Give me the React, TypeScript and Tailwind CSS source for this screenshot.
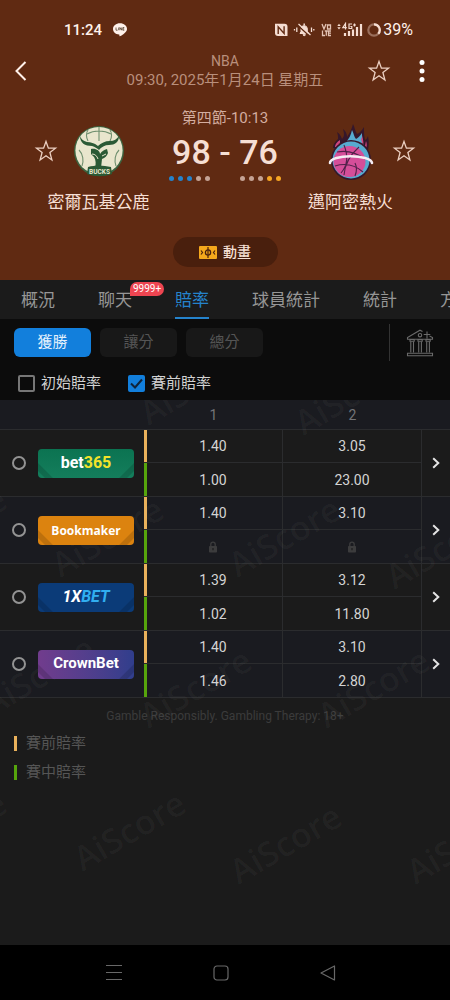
import React, { useState } from "react";
import type { ReactNode } from "react";

function StarIcon() {
  return (
    <svg viewBox="0 0 24 24" className="size-6" fill="none" stroke="currentColor" strokeWidth="1.3" strokeLinejoin="miter">
      <path d="M12 2.500l2.400 6.700H21.500l-5.600 4.300 2 7.500L12 16.800l-5.900 4.200 2-7.500L2.500 9.200h7.100z" />
    </svg>
  );
}

function LineIcon() {
  return (
    <svg viewBox="0 0 16 16" className="h-4 w-4" aria-label="LINE">
      <path d="M8 1.200C4 1.200 1 3.700 1 6.900c0 2.900 2.500 5.200 6 5.600.5.1.5.5.4 1.100-.1.700.2.900.9.500C10.500 12.900 15 10 15 6.900c0-3.200-3.100-5.700-7-5.700z" fill="#fff1ea" />
      <path d="M4 5.500v2.700h1.600M6.700 5.500v2.700M7.900 8.200V5.500l1.800 2.700V5.500M12.300 5.500h-1.400v2.700h1.400M10.900 6.900h1.300" stroke="#54402f" strokeWidth=".8" fill="none" />
    </svg>
  );
}

function StatusIcons() {
  return (
    <svg viewBox="0 0 106 16" className="h-4 w-[106px]" fill="none" aria-hidden="true">
      <path d="M0 1.800h9.500q3 0 3 3V14H3q-3 0-3-3z" fill="#f5ddd2" />
      <path d="M3.200 12V4.800l5.900 6.700V4.200" stroke="#602a12" strokeWidth="1.400" />
      <path d="M25 11.500h8.500l-1.200-2V6.300a3.200 3.200 0 0 0-6.300 0v3.200zM28 12.700h2.500a1.300 1.300 0 0 1-2.500 0z" fill="#f5ddd2" stroke="#f5ddd2" strokeWidth="1" />
      <path d="M29.200 1.500v2" stroke="#f5ddd2" strokeWidth="1.500" />
      <path d="M23 3.500l12 11" stroke="#602a12" strokeWidth="1.500" />
      <path d="M23.500 2l12 11" stroke="#f5ddd2" strokeWidth="1.300" />
      <path d="M21.800 5.500v4.500M19.500 7v1.500M36.500 5.500v4.500M38.800 7v1.500" stroke="#f5ddd2" strokeWidth="1.300" />
      <path d="M47 2l2 5 2-5M52.500 3h3v4h-3zM47.500 8.500V13.500h2.500M49.800 9h3M51.300 9v4.800M56 9h-2.500v4.500H56M53.500 11.200H56" stroke="#e3c3b4" strokeWidth="1.300" />
      <path d="M64 1.800l1.700 2.200h-3.400zM64 7.500l1.700-2.200h-3.400z" fill="#f5ddd2" />
      <path d="M70.500 7.500v-6l-2.700 4.200h4M77 2h-3v4.500h2.800V4.500h-1.400M78 3h3M79.500 1.500v3" stroke="#f5ddd2" strokeWidth="1.200" />
      <path d="M70 14V11M74 14V9M78 14V7.500M82 14V5M86 14V2" stroke="#f5ddd2" strokeWidth="2.200" />
      <circle cx="99" cy="8" r="5.700" stroke="#9a6f5c" strokeWidth="2.200" />
      <path d="M99 2.300a5.700 5.700 0 0 1 4.300 9.500" stroke="#f5ddd2" strokeWidth="2.200" />
    </svg>
  );
}

function BucksLogo() {
  return (
    <svg viewBox="0 0 52 52" className="size-[52px]" fill="none" aria-hidden="true">
      <circle cx="26" cy="26" r="25" fill="#3c6440" />
      <circle cx="26" cy="25.500" r="23.600" fill="#e9e6cd" />
      <path d="M26 2v14M15 5c-2 3-2 7 0 11M37 5c2 3 2 7 0 11M14 9c7-4 17-4 24 0M6 25c4 4 5 11 3 16M46 25c-4 4-5 11-3 16" stroke="#6f8f6e" strokeWidth="1.100" />
      <path d="M7 11c0 7 5 10 12 10 3 1 5 2 7 4 2-3 6-5 10-5 6 0 10-3 10-9-2 3-5 5-9 5-5 0-9 2-12 5-4-3-7-4-11-4-4-1-6-3-7-6z" fill="#2b5a35" />
      <path d="M18 24c5-1 9 2 9 5 2-3 4-4 7-5l1 4c-1 3-3 5-6 6l-1 9h-6c1-4 1-8-1-11l-3-3z" fill="#2b5a35" />
      <path d="M19 29c3 0 5 2 6 5M29 31l4-2" stroke="#e9e6cd" strokeWidth="1" />
      <path d="M15 42c7-2 15-2 23 0l1 7c-8 3-17 3-25 0z" fill="#2b5a35" />
      <text x="26.500" y="48.500" textAnchor="middle" fill="#e9e6cd" fontSize="6.500" fontWeight="700" fontFamily="Roboto, sans-serif">BUCKS</text>
    </svg>
  );
}

function HeatLogo() {
  return (
    <svg viewBox="0 0 46 58" className="h-[58px] w-[46px]" fill="none" aria-hidden="true">
      <path d="M5 26c0-4 2-6 5-9 0-3 0-4-1-7 3 2 4 4 5 7 3-3 2-6 1-10 3 2 4 5 4 8 3-4 5-9 6-13 2 4 2 7 4 10 3-1 5-4 7-7 0 5 0 9 1 13 2-1 2-2 3-4 1 5 1 9 0 14z" fill="#35172b" />
      <path d="M17 21c4-4 6-8 7-13 2 4 2 7 4 9 2-1 4-3 6-6 0 5 0 9 2 13l-17 2z" fill="#57abd0" />
      <path d="M7 25c0-3 2-5 5-7 0 3 0 5-1 7zM33 17c1-1 1-2 1-4 1 5 2 7 1 11zM37 24l1-5c1 3 1 5 0 7z" fill="#cf4780" />
      <circle cx="23" cy="38" r="20" fill="#35172b" />
      <circle cx="23" cy="38" r="18.500" fill="#57abd0" />
      <ellipse cx="21.500" cy="39.500" rx="16" ry="15.500" fill="#d54e99" />
      <path d="M9 30c10-2 20 1 28 7M16 23c4 10 4 20-3 28M31 25c-8 7-14 15-15 28M7 44c10-3 20-1 28 6M27 41c2 4 2 8 0 13" stroke="#51214a" strokeWidth="1.100" />
      <path d="M2 41c0-9 41-9 42 0" stroke="#f5edf3" strokeWidth="2.600" strokeLinecap="round" />
    </svg>
  );
}

function CourtIcon() {
  return (
    <svg viewBox="0 0 18 13" className="h-[13px] w-[18px]" fill="none" aria-hidden="true">
      <rect width="18" height="13" rx="1" fill="#f5a81c" />
      <path d="M9 1v11M2 4.500l1.500 2L2 8.500M16 4.500l-1.500 2 1.500 2" stroke="#4a200d" strokeWidth="1.200" />
      <circle cx="9" cy="6.500" r="2.600" stroke="#4a200d" strokeWidth="1.300" />
    </svg>
  );
}

function BankIcon() {
  return (
    <svg viewBox="0 0 28 28" className="size-7" fill="none" stroke="#6a6a6a" strokeWidth="1.100" aria-hidden="true">
      <path d="M16.500 2.500L14 1.200 1.500 8.500v1.700h25V8.500l-3-1.500M21 2.500v7M17.700 5.500h6.600" />
      <circle cx="14" cy="6.200" r="1.700" />
      <path d="M4 10.500h4.200v1.700H4zM12 10.500h4.200v1.700H12zM20 10.500h4.200v1.700H20z" />
      <path d="M4.800 12.500v11M7.500 12.500v11M12.700 12.500v11M15.400 12.500v11M20.700 12.500v11M23.400 12.500v11" />
      <path d="M1.500 24.200h25v2.600h-25z" />
    </svg>
  );
}

function LockIcon() {
  return (
    <svg viewBox="0 0 10 12" className="mx-auto h-3 w-2.5" role="img" aria-label="已鎖定">
      <path d="M2.800 5V3.300a2.200 2.200 0 0 1 4.400 0V5" fill="none" stroke="#3c3c3d" strokeWidth="1.300" />
      <rect x="1" y="5" width="8" height="6.500" rx=".8" fill="#3c3c3d" />
      <path d="M5 7v2.300" stroke="#1c1c1e" strokeWidth="1.200" />
    </svg>
  );
}

function ChevronIcon() {
  return (
    <svg viewBox="0 0 8 12" className="h-3 w-2" fill="none" stroke="#e4e4e4" strokeWidth="2" aria-hidden="true">
      <path d="M1.200 1.200L6.300 6l-5.100 4.800" />
    </svg>
  );
}

const quarterTones = {
  blue: "bg-[#2583cc]",
  pale: "bg-[#c4a395]",
  gold: "bg-[#f6a623]",
};

function Dots({ tones }: { tones: (keyof typeof quarterTones)[] }) {
  return (
    <div className="flex gap-1">
      {tones.map((tone, i) => (
        <span key={i} className={`size-[5px] rounded-full ${quarterTones[tone]}`} />
      ))}
    </div>
  );
}

interface Bookie {
  name: string;
  plate: string;
  label: ReactNode;
  shaded: boolean;
  pre: string[];
  live: (string | null)[];
}

const bookies: Bookie[] = [
  {
    name: "bet365",
    plate: "bg-linear-to-b from-[#0b7351] to-[#147e5c]",
    label: <span className="text-base font-bold">bet<span className="text-[#f4e32a]">365</span></span>,
    shaded: false,
    pre: ["1.40", "3.05"],
    live: ["1.00", "23.00"],
  },
  {
    name: "Bookmaker",
    plate: "bg-[#dc830f]",
    label: <span className="font-['Open_Sans',sans-serif] text-xs font-bold">Bookmaker</span>,
    shaded: true,
    pre: ["1.40", "3.10"],
    live: [null, null],
  },
  {
    name: "1XBET",
    plate: "bg-[#0b3b78]",
    label: <span className="text-base font-bold italic">1X<span className="text-[#31aef0]">BET</span></span>,
    shaded: false,
    pre: ["1.39", "3.12"],
    live: ["1.02", "11.80"],
  },
  {
    name: "CrownBet",
    plate: "bg-linear-to-r from-[#713c8d] to-[#303e8c]",
    label: <span className="text-[15px] font-bold">CrownBet</span>,
    shaded: true,
    pre: ["1.40", "3.10"],
    live: ["1.46", "2.80"],
  },
];

function OddsRows({ bookie, picked, onPick }: { bookie: Bookie; picked: boolean; onPick: () => void }) {
  const tone = bookie.shaded ? "bg-[#1a1b20]" : "bg-[#1b1b1b]";
  return (
    <tbody className={tone}>
      <tr className="h-[33px]">
        <th rowSpan={2} scope="rowgroup" className="border-b border-[#2b2c2e] p-0 pl-3">
          <label className="flex items-center gap-3">
            <input
              type="radio"
              name="bookie"
              aria-label={bookie.name}
              checked={picked}
              onChange={onPick}
              className="size-3.5 shrink-0 appearance-none rounded-full border-2 border-[#939393] checked:border-4"
            />
            <span className={`relative z-10 flex h-[29px] w-24 items-center justify-center overflow-hidden rounded text-white ${bookie.plate}`}>
              <svg viewBox="0 0 96 29" className="absolute inset-0" aria-hidden="true">
                <path d="M0 14l15 15h-8L0 22zM96 14L81 29h8l7-7z" fill="#000" fillOpacity=".14" />
              </svg>
              <span className="relative">{bookie.label}</span>
            </span>
          </label>
        </th>
        {bookie.pre.map((odd, i) => (
          <td key={i} className={`border-r border-b border-[#2b2c2e] p-0 text-center ${i === 0 ? "shadow-[inset_3px_0_#e9b15b]" : ""}`}>{odd}</td>
        ))}
        <td rowSpan={2} className="border-b border-[#2b2c2e] p-0">
          <button type="button" aria-label={`${bookie.name} 詳情`} className="flex h-8 w-full items-center justify-center">
            <ChevronIcon />
          </button>
        </td>
      </tr>
      <tr className="h-[34px]">
        {bookie.live.map((odd, i) => (
          <td key={i} className={`border-r border-b border-[#2b2c2e] p-0 text-center ${i === 0 ? "shadow-[inset_3px_0_#56a50c]" : ""}`}>{odd ?? <LockIcon />}</td>
        ))}
      </tr>
    </tbody>
  );
}

const watermarks = [
  "left-[195px] top-[-16px]",
  "left-[350px] top-[-6px]",
  "left-[-50px] top-[126px]",
  "left-[107px] top-[136px]",
  "left-[284px] top-[136px]",
  "left-[441px] top-[148px]",
  "left-[38px] top-[275px]",
  "left-[195px] top-[287px]",
  "left-[373px] top-[287px]",
  "left-[-50px] top-[430px]",
  "left-[129px] top-[430px]",
  "left-[285px] top-[443px]",
  "left-[462px] top-[443px]",
];

function Team({ name, side, children }: { name: string; side: "home" | "away"; children: ReactNode }) {
  const star = (
    <button type="button" aria-label={`收藏 ${name}`} className="text-[#ecd0c2]">
      <StarIcon />
    </button>
  );
  return (
    <div className={`flex flex-col items-center pt-3.5 ${side === "home" ? "pl-7" : "pr-[30px]"}`}>
      <div className="grid h-[58px] grid-cols-[24px_52px_24px] items-center justify-items-center gap-x-[15px]">
        {side === "home" ? star : <span />}
        {children}
        {side === "away" ? star : <span />}
      </div>
      <h2 className="mt-2.5 text-[17px] leading-6 whitespace-nowrap text-[#f6dfd4]">{name}</h2>
    </div>
  );
}

const tabs = ["概況", "聊天", "賠率", "球員統計", "統計", "方"];
const markets = ["獲勝", "讓分", "總分"];

export default function App() {
  const [tab, setTab] = useState("賠率");
  const [market, setMarket] = useState("獲勝");
  const [opening, setOpening] = useState(false);
  const [preMatch, setPreMatch] = useState(true);
  const [picked, setPicked] = useState("");

  return (
    <div className="flex min-h-screen flex-col overflow-hidden bg-[#1b1b1b] font-[Roboto,'Noto_Sans_CJK_TC',sans-serif]">
      <header className="bg-[#602a12] pt-5 pb-[13px]">
        <div className="flex h-5 items-center justify-between pr-[37px] pl-16 text-[#fff1ea]">
          <div className="flex items-center gap-2.5 text-[15px] font-medium">
            <span>11:24</span>
            <LineIcon />
          </div>
          <div className="flex items-center gap-0.5">
            <StatusIcons />
            <span className="text-base">39%</span>
          </div>
        </div>

        <div className="mt-3 grid h-[38px] grid-cols-[85px_1fr_85px] items-center">
          <button type="button" aria-label="返回" className="ml-3.5 w-4 text-[#fff1ea]">
            <svg viewBox="0 0 14 22" className="h-[22px] w-3.5" fill="none" stroke="currentColor" strokeWidth="2">
              <path d="M11.500 2L2.500 11l9 9" />
            </svg>
          </button>
          <div className="text-center text-[#b98f7c]">
            <p className="text-sm leading-[19px]">NBA</p>
            <h1 className="text-[15px] leading-[19px] whitespace-nowrap">09:30, 2025年1月24日 星期五</h1>
          </div>
          <div className="flex items-center justify-end gap-7 pr-[25px] text-[#ecd0c2]">
            <button type="button" aria-label="收藏比賽"><StarIcon /></button>
            <button type="button" aria-label="更多" className="text-white">
              <svg viewBox="0 0 6 22" className="h-[22px] w-1.5 overflow-visible" fill="currentColor">
                <circle cx="3" cy="2.500" r="2.500" />
                <circle cx="3" cy="11" r="2.500" />
                <circle cx="3" cy="19.500" r="2.500" />
              </svg>
            </button>
          </div>
        </div>

        <section className="mt-[18px] grid grid-cols-[1fr_112px_1fr]">
          <Team name="密爾瓦基公鹿" side="home"><BucksLogo /></Team>
          <div className="flex flex-col items-center">
            <p className="text-[15px] leading-5 text-[#d3ada0]">第四節-10:13</p>
            <p className="mt-1 text-[34px] leading-10 font-medium whitespace-nowrap text-[#f6dfd4]">98 - 76</p>
            <div className="mt-1 flex w-full justify-between">
              <Dots tones={["blue", "blue", "blue", "pale", "pale"]} />
              <Dots tones={["pale", "pale", "pale", "gold", "gold"]} />
            </div>
          </div>
          <Team name="邁阿密熱火" side="away"><HeatLogo /></Team>
        </section>

        <button type="button" className="mx-auto mt-[23px] flex h-[30px] w-[105px] items-center justify-center gap-1.5 rounded-full bg-[#491f0d] text-sm font-medium text-[#f6dfd4]">
          <CourtIcon />
          動畫
        </button>
      </header>

      <nav className="flex h-[39px] gap-[43px] overflow-hidden bg-[#1b1b1b] pl-[21px]">
        {tabs.map((name) => (
          <button
            key={name}
            type="button"
            onClick={() => setTab(name)}
            className={`relative h-full shrink-0 border-b-2 pt-1 text-[17px] whitespace-nowrap ${tab === name ? "border-[#2583cc] text-[#2583cc]" : "border-transparent text-[#969696]"}`}
          >
            {name}
            {name === "聊天" && (
              <span className="absolute top-0.5 left-8 rounded-[7px] rounded-bl-none bg-[#ee4551] px-[3px] text-[10px] leading-[14px] text-white">9999+</span>
            )}
          </button>
        ))}
      </nav>

      <section className="bg-[#0c0c0c]">
        <div className="flex items-center pt-[5px] pr-4 pl-3.5">
          <div className="flex flex-1 gap-[9px]">
            {markets.map((name) => (
              <button
                key={name}
                type="button"
                onClick={() => setMarket(name)}
                className={`h-[29px] w-[77px] rounded-md text-[15px] ${market === name ? "bg-[#127fdc] text-[#e3f1fc]" : "bg-[#181818] text-[#555555]"}`}
              >
                {name}
              </button>
            ))}
          </div>
          <div className="flex h-[37px] items-center border-l border-[#333333] pl-4">
            <button type="button" aria-label="博彩公司"><BankIcon /></button>
          </div>
        </div>
        <div className="flex h-[39px] items-center gap-[27px] pt-1.5 pl-[18px] text-[15px] text-[#d2d2d2]">
          <label className="flex items-center gap-1.5">
            <input
              type="checkbox"
              checked={opening}
              onChange={(e) => setOpening(e.target.checked)}
              className="size-[17px] appearance-none rounded-xs border-2 border-[#777777] checked:bg-[#127fdc]"
            />
            初始賠率
          </label>
          <label className="flex items-center gap-1.5">
            <span className="relative flex">
              <input
                type="checkbox"
                checked={preMatch}
                onChange={(e) => setPreMatch(e.target.checked)}
                className="size-[17px] appearance-none rounded-xs border-2 border-[#777777] checked:border-[#127fdc] checked:bg-[#127fdc]"
              />
              {preMatch && (
                <svg viewBox="0 0 17 17" className="pointer-events-none absolute inset-0" fill="none" stroke="#10243a" strokeWidth="2">
                  <path d="M3 8.500l4 4 7-8" />
                </svg>
              )}
            </span>
            賽前賠率
          </label>
        </div>
      </section>

      <main className="relative flex-1 overflow-hidden">
        <table className="w-full table-fixed border-separate border-spacing-0 text-sm text-[#d4d4d4]">
          <colgroup>
            <col className="w-[144px]" />
            <col />
            <col />
            <col className="w-7" />
          </colgroup>
          <thead className="bg-[#1a1b20] text-[#737477]">
            <tr className="h-[30px]">
              <td className="border-b border-[#2b2c2e] p-0" />
              <th scope="col" className="border-b border-[#2b2c2e] p-0 text-center font-normal">1</th>
              <th scope="col" className="border-b border-[#2b2c2e] p-0 text-center font-normal">2</th>
              <td className="border-b border-[#2b2c2e] p-0" />
            </tr>
          </thead>
          {bookies.map((b) => (
            <OddsRows key={b.name} bookie={b} picked={picked === b.name} onPick={() => setPicked(b.name)} />
          ))}
        </table>

        <p className="mt-2 text-center text-xs leading-5 text-[#3b3b3b]">Gamble Responsibly. Gambling Therapy: 18+</p>
        <ul className="mt-[3px] pl-3.5 text-[15px] leading-[29px] text-[#555555]">
          <li className="flex items-center gap-[9px]"><span className="h-[15px] w-[3px] bg-[#e9b15b]" />賽前賠率</li>
          <li className="flex items-center gap-[9px]"><span className="h-[15px] w-[3px] bg-[#56a50c]" />賽中賠率</li>
        </ul>

        <div className="pointer-events-none absolute inset-0 overflow-hidden select-none" aria-hidden="true">
          {watermarks.map((spot) => (
            <span key={spot} className={`absolute -translate-1/2 -rotate-30 font-['Open_Sans',sans-serif] text-[34px] leading-none font-semibold text-white/4 ${spot}`}>
              AiScore
            </span>
          ))}
        </div>
      </main>

      <footer className="flex h-[55px] items-center justify-center gap-[91px] bg-black pr-2">
        <button type="button" aria-label="最近使用">
          <svg viewBox="0 0 16 16" className="size-4" stroke="#686868" strokeWidth="1"><path d="M0 .5h16M0 7.500h16M0 14.500h16" /></svg>
        </button>
        <button type="button" aria-label="主畫面">
          <svg viewBox="0 0 16 16" className="size-4" fill="none" stroke="#686868" strokeWidth="1.200"><rect x="1" y="1" width="14" height="14" rx="3" /></svg>
        </button>
        <button type="button" aria-label="返回上頁">
          <svg viewBox="0 0 16 16" className="size-4" fill="none" stroke="#686868" strokeWidth="1.200" strokeLinejoin="round"><path d="M1 8L14.500 1v14z" /></svg>
        </button>
      </footer>
    </div>
  );
}
